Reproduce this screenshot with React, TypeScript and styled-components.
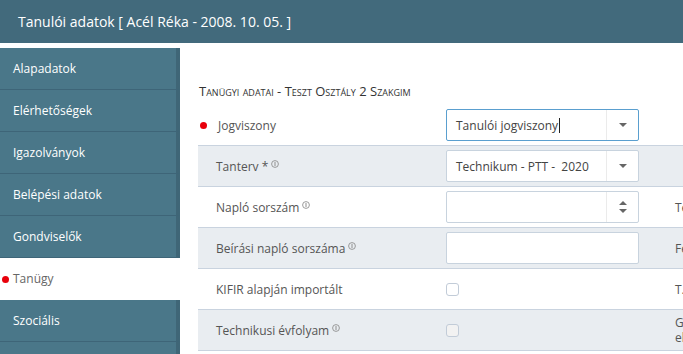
import React from 'react';
import styled, { createGlobalStyle } from 'styled-components';

const GlobalStyle = createGlobalStyle`
  html, body {
    margin: 0;
    padding: 0;
    overflow: hidden;
    background: #fff;
  }
  body {
    font-family: 'Open Sans', 'Liberation Sans', sans-serif;
    color: #444;
  }
`;

const Page = styled.div`
  width: 683px;
  height: 354px;
  overflow: hidden;
`;

const Header = styled.div`
  height: 43px;
  background: #426a7c;
  color: #fff;
  font-size: 14px;
  display: flex;
  align-items: center;
  padding-left: 18px;
`;

const Body = styled.div`
  display: flex;
  margin-top: 5px;
`;

const Sidebar = styled.nav`
  width: 180px;
  flex-shrink: 0;
  display: flex;
  flex-direction: column;
`;

const NavItem = styled.div<{ $active?: boolean }>`
  height: 41px;
  display: flex;
  align-items: center;
  padding-left: 13px;
  font-size: 12px;
  color: ${(p) => (p.$active ? '#666' : '#fff')};
  background: ${(p) => (p.$active ? '#fff' : '#4a7789')};
  border-right: 4px solid ${(p) => (p.$active ? '#fff' : '#3f6677')};
  border-bottom: 1px solid ${(p) => (p.$active ? '#fff' : '#3e6578')};
  position: relative;
`;

const NavDot = styled.span`
  position: absolute;
  left: 2px;
  top: 50%;
  width: 7px;
  height: 7px;
  margin-top: -3px;
  border-radius: 50%;
  background: #e8000b;
`;

const Content = styled.main`
  flex: 1;
  padding-left: 18px;
  min-width: 0;
`;

const Title = styled.h4`
  margin: 36px 0 7px 1px;
  font-size: 13px;
  line-height: 14px;
  font-weight: 400;
  font-variant: small-caps;
  color: #333;
  white-space: nowrap;
`;

const Table = styled.div`
  width: 620px;
`;

const Row = styled.div<{ $shaded?: boolean }>`
  height: 40px;
  display: flex;
  align-items: center;
  background: ${(p) => (p.$shaded ? '#e9edf1' : '#fff')};
  border-bottom: 1px solid #c9d3df;
`;

const LabelCell = styled.div`
  width: 248px;
  flex-shrink: 0;
  display: flex;
  align-items: center;
  font-size: 12px;
  color: #555;
  white-space: nowrap;
`;

const Dot = styled.span`
  width: 7px;
  height: 7px;
  border-radius: 50%;
  background: #e8000b;
  margin: 0 11px 0 2px;
`;

const LabelText = styled.span<{ $indent?: boolean }>`
  padding-left: ${(p) => (p.$indent ? '18px' : '0')};
  display: flex;
  align-items: center;
`;

const Info = styled.svg`
  margin-left: 3px;
  margin-top: -5px;
`;

const FieldCell = styled.div`
  width: 193px;
  flex-shrink: 0;
  display: flex;
  align-items: center;
`;

const Box = styled.div<{ $focused?: boolean }>`
  width: 100%;
  height: 30px;
  box-sizing: content-box;
  border: 1px solid ${(p) => (p.$focused ? '#5a9fcf' : '#c8d3de')};
  border-radius: 2px;
  background: #fff;
  display: flex;
  align-items: center;
`;

const BoxText = styled.div`
  flex: 1;
  padding-left: 9px;
  font-size: 12px;
  color: #444;
  display: flex;
  align-items: center;
  white-space: pre;
`;

const Cursor = styled.span`
  width: 1px;
  height: 15px;
  background: #222;
  margin-left: 1px;
`;

const Addon = styled.div`
  width: 31px;
  align-self: stretch;
  border-left: 1px solid #ebebeb;
  display: flex;
  flex-direction: column;
  align-items: center;
  justify-content: center;
  gap: 4px;
`;

const Check = styled.span<{ $disabled?: boolean }>`
  width: 11px;
  height: 11px;
  border: 1px solid #c2ccd8;
  border-radius: 3px;
  background: ${(p) => (p.$disabled ? '#f2f2f2' : '#fff')};
`;

const Extra = styled.div`
  margin-left: 36px;
  width: 70px;
  font-size: 12px;
  line-height: 15px;
  color: #555;
`;

const InfoIcon = () => (
  <Info width="8" height="8" viewBox="0 0 8 8">
    <circle cx="4" cy="4" r="3.4" fill="none" stroke="#8f8f8f" strokeWidth="0.9" />
    <path d="M4 2v4" stroke="#8f8f8f" strokeWidth="1" />
  </Info>
);

const Caret = ({ up }: { up?: boolean }) => (
  <svg width="8" height="4" viewBox="0 0 8 4">
    <path d={up ? 'M0 4L4 0L8 4Z' : 'M0 0L8 0L4 4Z'} fill="#666" />
  </svg>
);

const navItems = ['Alapadatok', 'Elérhetőségek', 'Igazolványok', 'Belépési adatok', 'Gondviselők', 'Tanügy', 'Szociális', 'Egyéb'];

export default function App() {
  return (
    <Page>
      <GlobalStyle />
      <Header>Tanulói adatok [ Acél Réka - 2008. 10. 05. ]</Header>
      <Body>
        <Sidebar>
          {navItems.map((n) => (
            <NavItem key={n} $active={n === 'Tanügy'}>
              {n === 'Tanügy' && <NavDot />}
              {n}
            </NavItem>
          ))}
        </Sidebar>
        <Content>
          <Title>Tanügyi adatai - Teszt Osztály 2 Szakgim</Title>
          <Table>
            <Row>
              <LabelCell>
                <Dot />
                <LabelText>Jogviszony</LabelText>
              </LabelCell>
              <FieldCell>
                <Box $focused>
                  <BoxText>
                    Tanulói jogviszony<Cursor />
                  </BoxText>
                  <Addon>
                    <Caret />
                  </Addon>
                </Box>
              </FieldCell>
            </Row>
            <Row $shaded>
              <LabelCell>
                <LabelText $indent>
                  Tanterv *<InfoIcon />
                </LabelText>
              </LabelCell>
              <FieldCell>
                <Box>
                  <BoxText>Technikum - PTT -  2020</BoxText>
                  <Addon>
                    <Caret />
                  </Addon>
                </Box>
              </FieldCell>
            </Row>
            <Row>
              <LabelCell>
                <LabelText $indent>
                  Napló sorszám<InfoIcon />
                </LabelText>
              </LabelCell>
              <FieldCell>
                <Box>
                  <BoxText />
                  <Addon>
                    <Caret up />
                    <Caret />
                  </Addon>
                </Box>
              </FieldCell>
              <Extra>Tervezett</Extra>
            </Row>
            <Row $shaded>
              <LabelCell>
                <LabelText $indent>
                  Beírási napló sorszáma<InfoIcon />
                </LabelText>
              </LabelCell>
              <FieldCell>
                <Box>
                  <BoxText />
                </Box>
              </FieldCell>
              <Extra>Felvétel</Extra>
            </Row>
            <Row>
              <LabelCell>
                <LabelText $indent>KIFIR alapján importált</LabelText>
              </LabelCell>
              <FieldCell>
                <Check />
              </FieldCell>
              <Extra>T.</Extra>
            </Row>
            <Row $shaded>
              <LabelCell>
                <LabelText $indent>
                  Technikusi évfolyam<InfoIcon />
                </LabelText>
              </LabelCell>
              <FieldCell>
                <Check $disabled />
              </FieldCell>
              <Extra>Gépész elhelyezés</Extra>
            </Row>
            <Row>
              <LabelCell />
              <FieldCell>
                <Box>
                  <BoxText />
                </Box>
              </FieldCell>
            </Row>
          </Table>
        </Content>
      </Body>
    </Page>
  );
}
